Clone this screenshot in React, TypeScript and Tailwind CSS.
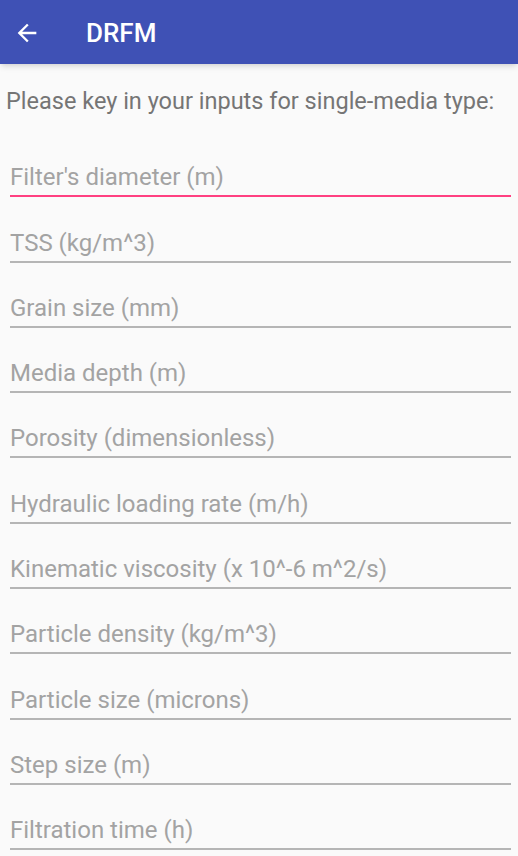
const fields = [
  "Filter's diameter (m)",
  "TSS (kg/m^3)",
  "Grain size (mm)",
  "Media depth (m)",
  "Porosity (dimensionless)",
  "Hydraulic loading rate (m/h)",
  "Kinematic viscosity (x 10^-6 m^2/s)",
  "Particle density (kg/m^3)",
  "Particle size (microns)",
  "Step size (m)",
  "Filtration time (h)",
];

export default function App() {
  return (
    <div className="w-[518px] h-[856px] overflow-hidden bg-[#fafafa] font-['Roboto',sans-serif]">
      {/* App bar */}
      <header className="relative z-10 h-16 bg-[#3f51b5] shadow-md flex items-center">
        <svg className="ml-[13px] w-7 h-7 mt-[2px]" viewBox="0 0 24 24" fill="white">
          <path d="M20 11H7.83l5.59-5.59L12 4l-8 8 8 8 1.41-1.41L7.83 13H20v-2z" />
        </svg>
        <h1 className="ml-[45px] mt-[2px] text-[26px] font-medium text-white leading-none">DRFM</h1>
      </header>

      <div className="h-[68px] pt-[23px] pl-[6px]">
        <p className="text-[23.5px] leading-7 text-[#757575] whitespace-nowrap">Please key in your inputs for single-media type:</p>
      </div>

      {fields.map((label, i) => (
        <div key={label} className="h-[65.3px] flex flex-col justify-end ml-[10px] mr-[7px]">
          <span className="text-[24px] leading-[28px] text-[#a3a3a3] whitespace-nowrap">{label}</span>
          <div className={i === 0 ? "mt-1 h-[2px] bg-[#ff4081]" : "mt-1 h-[2px] bg-[#b5b5b5]"} />
        </div>
      ))}
    </div>
  );
}
